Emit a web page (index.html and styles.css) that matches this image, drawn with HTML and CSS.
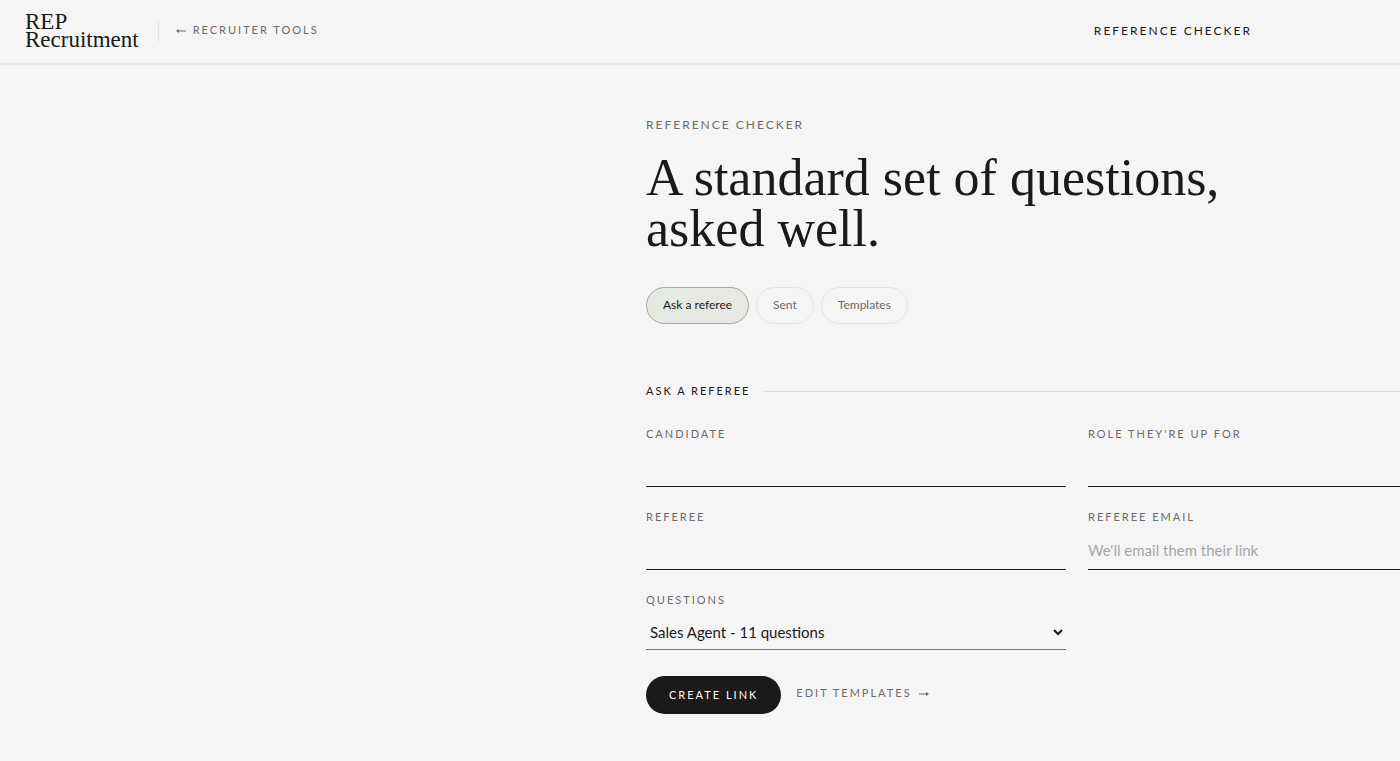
FILE: index.html
```html
<!DOCTYPE html>
<html lang="en">

<head>
    <meta charset="UTF-8">
    <meta name="viewport" content="width=device-width, initial-scale=1.0">
    <title>Reference Checker</title>
    <link rel="stylesheet" href="styles.css">
</head>

<body>

    <header class="topbar">
        <a class="logo" href="#">REP<br>Recruitment</a>
        <a class="back-link" href="#">
            <svg class="arrow" viewBox="0 0 10 6" aria-hidden="true"><path d="M10 4H1" /><path class="head" d="M0 4L3 2V6Z" /></svg>
            Recruiter tools
        </a>
        <span class="page-name">Reference Checker</span>
    </header>

    <main class="page">
        <p class="eyebrow">Reference Checker</p>
        <h1>A standard set of questions,<br>asked well.</h1>

        <nav class="tabs">
            <button type="button" class="tab active">Ask a referee</button>
            <button type="button" class="tab">Sent</button>
            <button type="button" class="tab">Templates</button>
        </nav>

        <h2 class="section-title">Ask a referee</h2>

        <form>
            <div class="fields">
                <div class="field">
                    <label for="candidate">Candidate</label>
                    <input type="text" id="candidate">
                </div>
                <div class="field">
                    <label for="role">Role they're up for</label>
                    <input type="text" id="role">
                </div>
                <div class="field">
                    <label for="referee">Referee</label>
                    <input type="text" id="referee">
                </div>
                <div class="field">
                    <label for="email">Referee email</label>
                    <input type="email" id="email" placeholder="We'll email them their link">
                </div>
                <div class="field">
                    <label for="questions">Questions</label>
                    <select id="questions">
                        <option>Sales Agent - 11 questions</option>
                    </select>
                </div>
            </div>

            <div class="actions">
                <button type="button" class="create">Create link</button>
                <a class="edit-link" href="#">
                    Edit templates
                    <svg class="arrow" viewBox="0 0 10 6" aria-hidden="true"><path d="M0 4H9" /><path class="head" d="M10 4L7 2V6Z" /></svg>
                </a>
            </div>
        </form>
    </main>

</body>

</html>
```
FILE: styles.css
```css
* {
    box-sizing: border-box;
}

body {
    margin: 0;
    background-color: #f5f5f5;
    color: #1a1a1a;
    font-family: Lato, sans-serif;
    font-variant-ligatures: none;
    overflow-x: hidden;
}

a {
    color: inherit;
    text-decoration: none;
}

.topbar {
    display: flex;
    align-items: center;
    height: 65px;
    padding: 0 148px 2px 25px;
    border-bottom: 2px solid #e8e8e8;
}

.logo {
    padding-right: 19px;
    font-family: "Liberation Serif", serif;
    font-size: 23px;
    line-height: 18px;
}

.back-link,
.page-name,
.eyebrow,
.section-title,
.field label,
.create,
.edit-link {
    font-size: 11px;
    font-weight: 400;
    line-height: 16px;
    letter-spacing: 2px;
    text-transform: uppercase;
}

.back-link,
.edit-link {
    display: flex;
    align-items: center;
    gap: 7px;
    color: #6b6b6b;
}

.back-link {
    height: 22px;
    padding: 0 0 2px 17px;
    border-left: 1px solid #e4e4e4;
}

.arrow {
    width: 10px;
    height: 6px;
    fill: none;
    stroke: currentColor;
}

.arrow .head {
    fill: currentColor;
    stroke: none;
}

.page-name {
    margin-left: auto;
    font-size: 12px;
}

/* the form column starts just left of the middle */
.page {
    width: 862px;
    margin-left: calc(50vw - 54px);
    padding: 52px 0 48px;
}

.eyebrow {
    margin: 0 0 19px;
    font-size: 12px;
    color: #6b6b6b;
}

h1 {
    margin: 0;
    font-family: "Liberation Serif", serif;
    font-size: 52px;
    font-weight: 400;
    line-height: 51px;
}

.tabs {
    display: flex;
    gap: 7px;
    margin: 33px 0 59px;
}

.tab {
    height: 37px;
    padding: 0 16px 2px;
    border: 1px solid #e4e4e4;
    border-radius: 19px;
    background-color: transparent;
    color: #6b6b6b;
    font-family: inherit;
    font-size: 12px;
}

.tab.active {
    border-color: #a3a8a0;
    background-color: #e6e9e2;
    color: #1a1a1a;
}

.section-title {
    display: flex;
    align-items: center;
    gap: 13px;
    margin: 0 0 27px;
}

.section-title::after {
    content: "";
    flex: 1;
    height: 1px;
    background-color: #dedede;
}

.fields {
    display: grid;
    grid-template-columns: 1fr 1fr;
    gap: 22px;
}

.field {
    display: flex;
    flex-direction: column;
    gap: 6px;
}

.field label {
    color: #6b6b6b;
}

.field input,
.field select {
    width: 100%;
    height: 39px;
    padding: 0;
    border: 0;
    border-bottom: 1px solid #1a1a1a;
    border-radius: 0;
    background-color: transparent;
    color: #1a1a1a;
    font-family: inherit;
    font-size: 15px;
}

.field select {
    height: 36px;
    border-bottom-color: #777;
}

.field input::placeholder {
    color: #a6a6a6;
}

.actions {
    display: flex;
    align-items: center;
    gap: 15px;
    margin-top: 26px;
}

.create {
    height: 38px;
    padding: 0 23px;
    border: 0;
    border-radius: 19px;
    background-color: #1a1a1a;
    color: #fff;
    font-family: inherit;
}

.edit-link {
    padding-bottom: 4px;
}
```
